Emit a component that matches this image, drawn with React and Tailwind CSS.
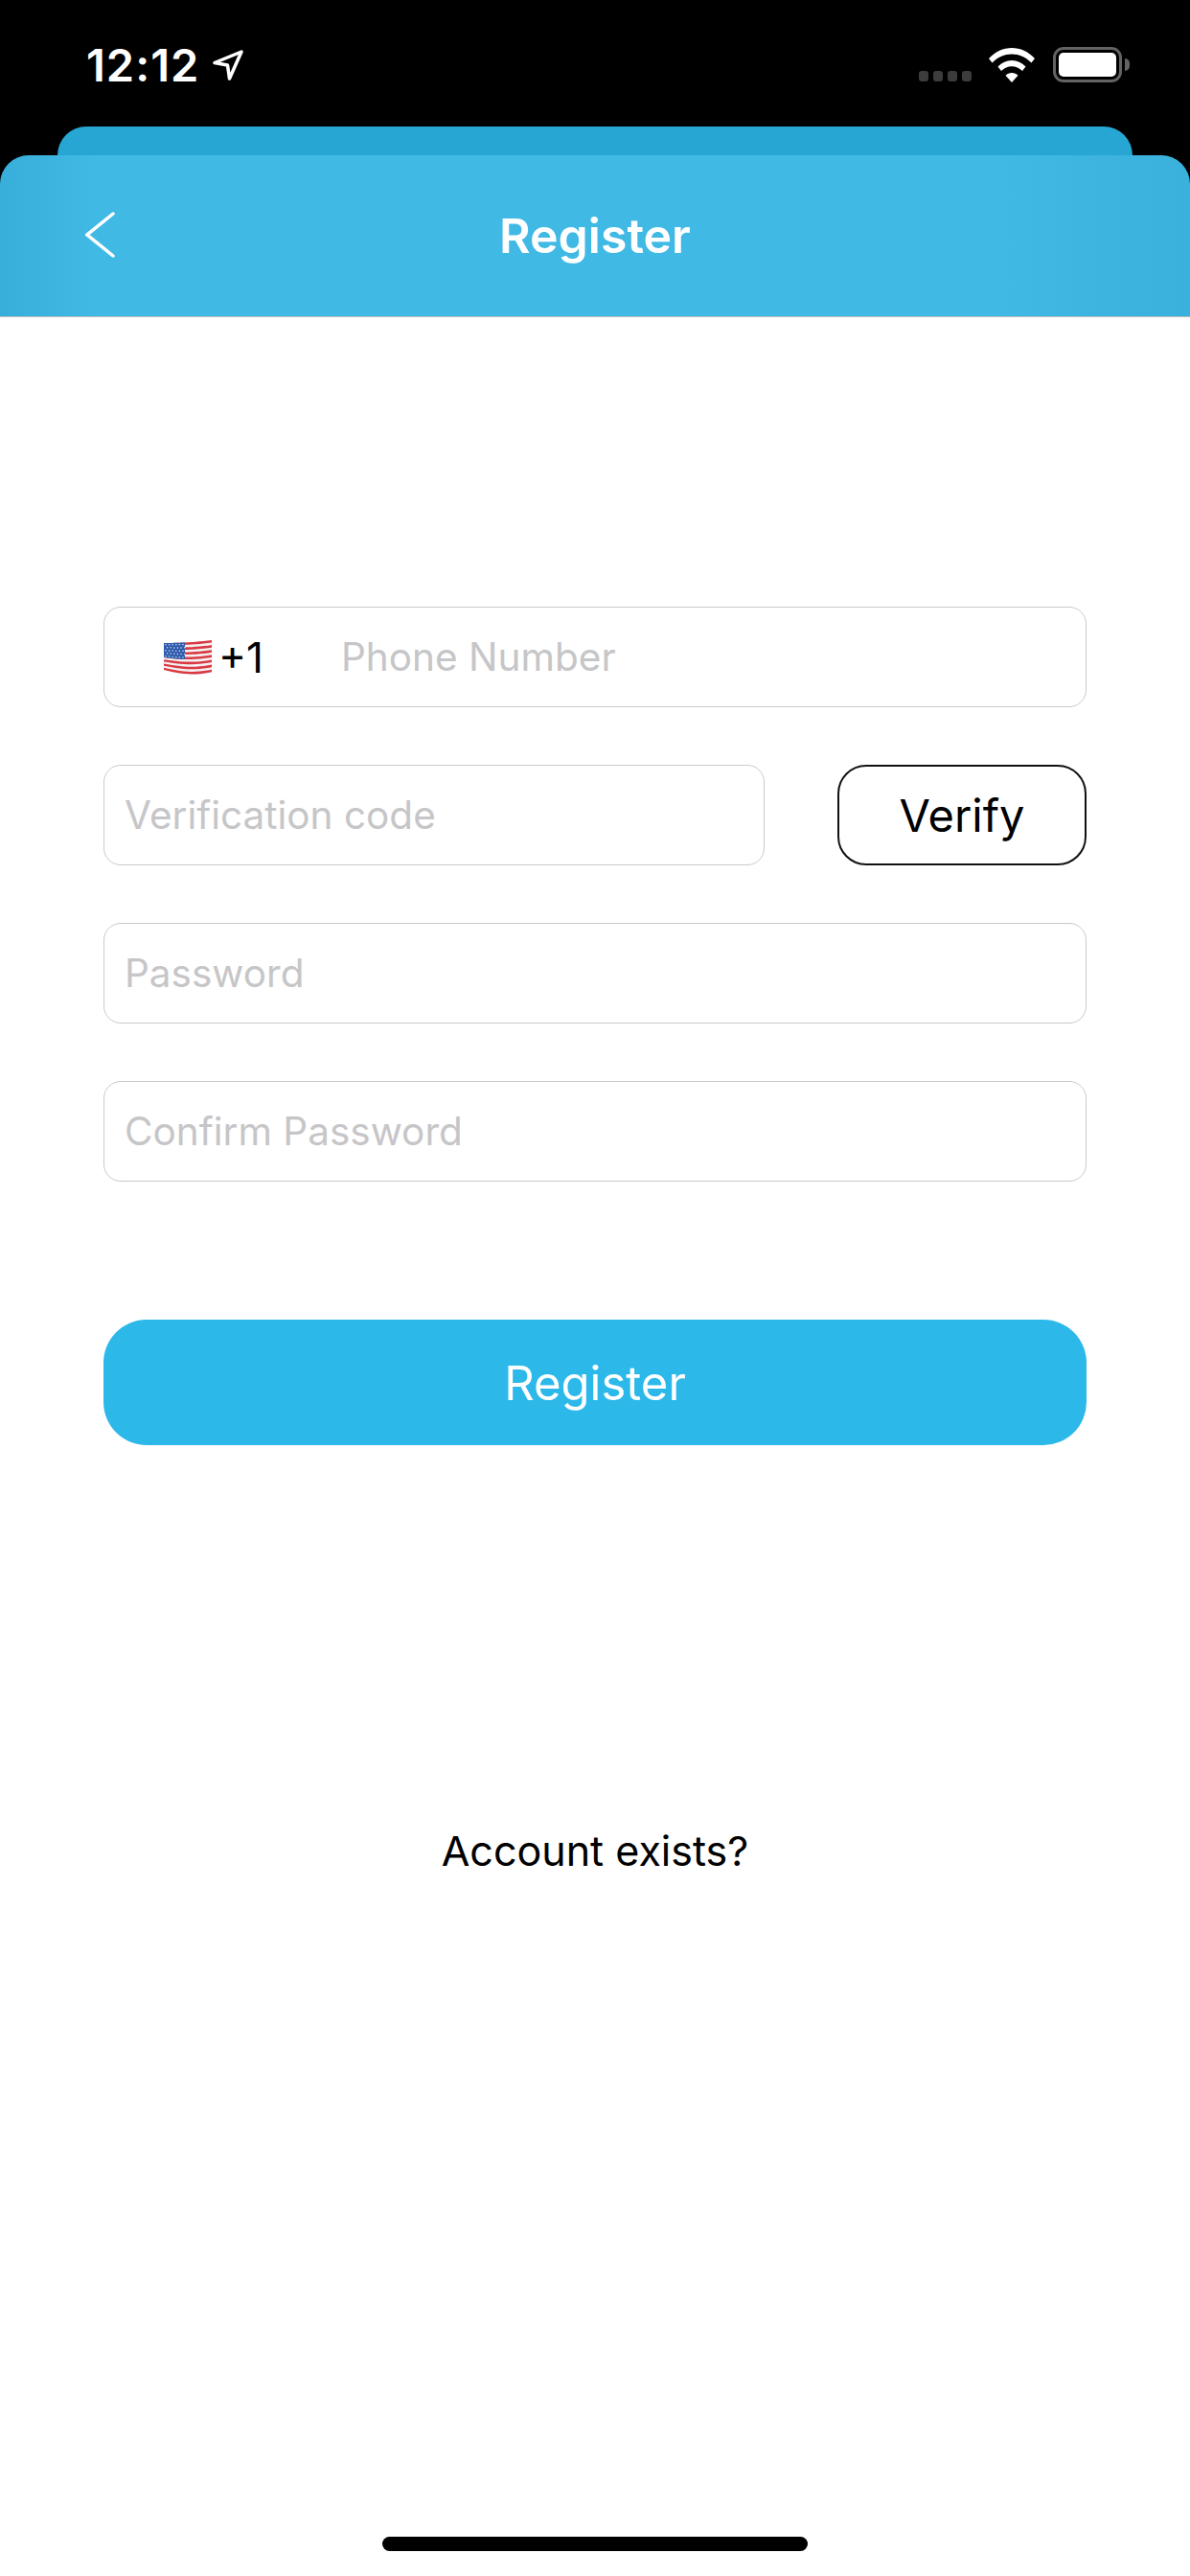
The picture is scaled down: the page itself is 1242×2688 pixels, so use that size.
const ui = { fontFamily: 'Inter, "Liberation Sans", sans-serif' };

function Field({ children, className = "" }) {
  return (
    <div className={"h-[105px] flex items-center rounded-[18px] border border-[#c9c9c9] px-[21px] pt-[1px] " + className}>
      {children}
    </div>
  );
}

const top = (x) => 3 - 3 * (x / 50) * (x / 50);
const bottom = (x) => 31 + 4.5 * Math.sin((Math.PI * x) / 60);
const py = (x, t) => top(x) * (1 - t) + bottom(x) * t;

function band(x0, x1, t0, t1) {
  const n = 12;
  const fwd = [];
  const back = [];
  for (let i = 0; i <= n; i++) {
    const x = x0 + ((x1 - x0) * i) / n;
    fwd.push(`${x.toFixed(2)} ${py(x, t0).toFixed(2)}`);
    back.unshift(`${x.toFixed(2)} ${py(x, t1).toFixed(2)}`);
  }
  return "M" + fwd.concat(back).join("L") + "Z";
}

function Flag() {
  const reds = [0, 2, 4, 6, 8, 10, 12];
  const stars = [];
  for (let r = 0; r < 5; r++) {
    for (let c = 0; c < 6; c++) {
      const x = 2 + c * 3.6 + (r % 2 ? 1.6 : 0);
      stars.push(<circle key={`${r}-${c}`} cx={x} cy={py(x, 0.06 + r * 0.105)} r="0.75" fill="#d5e0f4" />);
    }
  }
  return (
    <svg width="50" height="36" viewBox="0 0 50 36" className="shrink-0">
      <path d={band(0, 50, 0, 1)} fill="#f5f1f1" />
      {reds.map((i) => (
        <path key={i} d={band(0, 50, i / 13, (i + 1) / 13)} fill="#d93a45" />
      ))}
      <path d={band(0, 22, 0, 7 / 13)} fill="#2f5cab" />
      {stars}
    </svg>
  );
}

export default function App() {
  return (
    <div className="w-[1242px] h-[2688px] bg-white flex flex-col overflow-hidden" style={ui}>
      <div className="bg-black">
        <div className="h-[132px] flex items-start justify-between pl-[90px] pr-[71px]">
          <div className="flex items-center gap-[14px] pt-[44px]">
            <span className="text-white text-[47px] leading-[48px] font-semibold tracking-[1px]">12:12</span>
            <svg width="32" height="32" viewBox="0 0 32 32" fill="none" stroke="#fff" strokeWidth="3.500" strokeLinejoin="round">
              <path d="M30 2L2 13.500L15.500 16L17.500 30Z" />
            </svg>
          </div>
          <div className="flex items-end pt-[49px]">
            <div className="flex gap-[5px] pb-[1px] mr-[18px]">
              <span className="w-[10px] h-[11px] rounded-[3px] bg-[#3c3c3c]" />
              <span className="w-[10px] h-[11px] rounded-[3px] bg-[#3c3c3c]" />
              <span className="w-[10px] h-[11px] rounded-[3px] bg-[#3c3c3c]" />
              <span className="w-[10px] h-[11px] rounded-[3px] bg-[#3c3c3c]" />
            </div>
            <svg width="48" height="36" viewBox="0 0 48 36" className="mr-[19px]">
              <path d="M24 0C33 0 41 3.600 48 11L44.500 15.500C38.500 9.500 31.500 6.500 24 6.500S9.500 9.500 3.500 15.500L0 11C7 3.600 15 0 24 0Z" fill="#fff" />
              <path d="M24 13C29.500 13 34.500 15.200 38.500 19.500L35 24C31.800 20.800 28 19.200 24 19.200S16.200 20.800 13 24L9.500 19.500C13.500 15.200 18.500 13 24 13Z" fill="#fff" />
              <path d="M24 26C26.500 26 28.700 26.900 30.500 28.700L24 36L17.500 28.700C19.300 26.900 21.500 26 24 26Z" fill="#fff" />
            </svg>
            <div className="relative w-[72px] h-[37px] rounded-[11px] border-[3px] border-[#636363] p-[3px]">
              <div className="w-full h-full rounded-[5px] bg-white" />
              <div className="absolute right-[-11px] top-[9px] w-[5px] h-[13px] rounded-r-[5px] bg-[#636363]" />
            </div>
          </div>
        </div>
        <div className="h-[30px] mx-[60px] rounded-t-[30px] bg-[#27a6d3]" />
        <div className="relative h-[169px] rounded-t-[30px] border-b border-[#bcbcbc] bg-[linear-gradient(90deg,#38aeda_0%,#41b9e5_8%,#41b9e5_84%,#3ab0dc_100%)] flex items-center justify-center">
          <svg width="32" height="48" viewBox="0 0 32 48" fill="none" stroke="#fff" strokeWidth="3.500" strokeLinecap="round" className="absolute left-[89px] top-[59px]">
            <path d="M29 2L2 24L29 46" />
          </svg>
          <span className="text-white text-[50px] leading-none font-[560]">Register</span>
        </div>
      </div>

      <div className="flex flex-col px-[108px] pt-[302px]">
        <div className="flex flex-col gap-[60px]">
          <Field>
            <div className="flex items-center pl-[41px] w-[226px] shrink-0">
              <Flag />
              <span className="ml-[7px] text-black text-[44px] leading-none">+1</span>
            </div>
            <span className="text-[#c6c6c8] text-[40.500px] leading-none">Phone Number</span>
          </Field>
          <div className="flex justify-between">
            <Field className="w-[690px]">
              <span className="text-[#c6c6c8] text-[40.500px] leading-none">Verification code</span>
            </Field>
            <div className="w-[260px] h-[105px] rounded-[30px] border-2 border-[#111111] flex items-center justify-center text-black text-[47px] leading-none">
              Verify
            </div>
          </div>
          <Field>
            <span className="text-[#c6c6c8] text-[40.500px] leading-none">Password</span>
          </Field>
          <Field>
            <span className="text-[#c6c6c8] text-[40.500px] leading-none">Confirm Password</span>
          </Field>
        </div>
        <div className="mt-[144px] h-[131px] pt-[2px] rounded-[45px] bg-[#2db8ea] flex items-center justify-center text-white text-[49px] leading-none">
          Register
        </div>
        <div className="mt-[397px] text-center text-black text-[43px] leading-[52px]">Account exists?</div>
      </div>

      <div className="mt-auto pb-[26px] flex justify-center">
        <div className="w-[444px] h-[15px] rounded-full bg-black" />
      </div>
    </div>
  );
}
